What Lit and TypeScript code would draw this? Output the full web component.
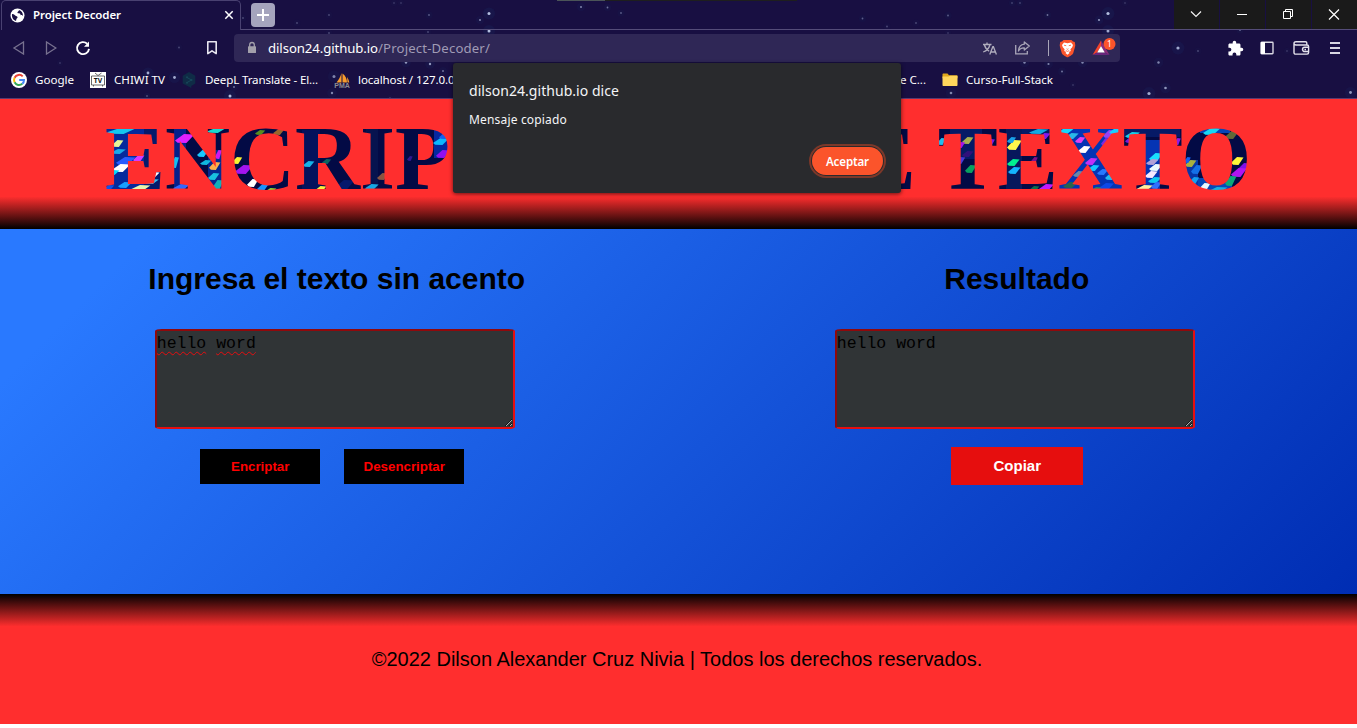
import { LitElement, html, svg, css } from "lit";
import { customElement } from "lit/decorators.js";

const UI = '"Noto Sans", "Open Sans", sans-serif';
const ARIAL = '"Liberation Sans", Arial, sans-serif';
const pen = document.createElement("canvas").getContext("2d")!;

/** Inline style that tracks a label so that it spans `width` pixels. */
function track(text: string, font: string, width: number) {
  pen.font = font;
  const gap = (width - pen.measureText(text).width) / text.length;
  return `letter-spacing:${gap.toFixed(3)}px`;
}

/** A single-line label with a fixed advance width. */
const label = (cls: string, text: string, font: string, width: number) =>
  html`<span class="label ${cls}" style="font:${font};${track(text, font, width)}">${text}</span>`;

// x, y, radius, opacity
const STARS: [number, number, number, number][] = [
  [489, 13.5, 1.5, 0.9], [480, 20, 1, 0.6], [489, 31, 1.5, 0.9], [581, 7, 1, 0.6], [607.5, 7.5, 0.9, 0.5],
  [621, 13, 0.9, 0.4], [329, 15, 0.9, 0.3], [297, 23, 0.9, 0.3], [394, 3, 0.8, 0.3], [401, 3, 0.8, 0.3],
  [429, 15, 0.9, 0.4], [428, 32, 0.9, 0.3], [329, 33, 0.9, 0.3], [406, 62.5, 1.2, 0.7], [430, 64, 1.2, 0.7],
  [443, 71, 1, 0.5], [334, 76.5, 1.5, 0.6], [332, 93, 1.2, 0.6], [390, 98, 0.8, 0.3], [174.5, 77.5, 1.4, 0.8],
  [148, 73, 1.4, 0.8], [230, 96, 1.5, 0.9], [234, 87, 1, 0.5], [147, 96, 0.8, 0.5], [60, 63, 0.8, 0.3],
  [179, 47.5, 0.9, 0.3], [243, 18, 0.9, 0.3], [862.5, 18.5, 0.9, 0.4], [887, 26.5, 0.9, 0.3], [916, 23, 0.9, 0.3],
  [948, 15.5, 0.9, 0.4], [1047.5, 15, 0.9, 0.5], [1012, 3, 0.8, 0.4], [1020, 3, 0.8, 0.4], [1108, 13.5, 1.6, 0.9],
  [1099, 20, 1.1, 0.7], [1108, 31, 1.5, 0.8], [1125, 3, 0.8, 0.3], [1178, 48, 1.6, 0.8], [1198, 51, 0.9, 0.3],
  [1158.5, 62.5, 1.2, 0.6], [1024.5, 62.5, 1.2, 0.6], [1048.5, 64, 1.1, 0.6], [1082.5, 62.5, 1.2, 0.6],
  [1062, 71.5, 1, 0.5], [1073, 85, 0.8, 0.3], [951, 93, 1.3, 0.6], [1149, 93.5, 1.6, 0.8], [1165.5, 88, 1.3, 0.7],
  [1350.5, 92.5, 1.4, 0.7], [1240, 30, 0.9, 0.5], [1287, 51, 0.8, 0.3], [948, 33, 0.8, 0.3],
];

const NAVY = "#030a45";
type Tile = [number, number, number, number, string];
// x, y, width, height, fill: soft washes under the lights
const BANDS: Tile[] = [
  [100, 125, 44, 70, "#062a9c"], [144, 125, 18, 70, "#051a6c"], [174, 125, 12, 70, "#04208c"], [208, 150, 14, 40, "#05298f"],
  [302, 130, 18, 60, "#04125c"], [366, 128, 12, 60, "#06134f"], [434, 128, 14, 30, "#0528a0"],
  [950, 125, 32, 34, "#061a66"], [1006, 125, 16, 66, "#07185c"], [1022, 125, 32, 10, "#061a66"],
  [1056, 125, 66, 70, "#0434b4"], [1122, 125, 58, 12, "#061a66"], [1144, 140, 16, 50, "#0434b4"],
  [1184, 160, 14, 30, "#0636a8"], [1198, 178, 34, 14, "#0648b8"], [1200, 125, 30, 8, "#0645b8"],
];
const LIGHTS: Tile[] = [
  [108, 129, 24, 4, "#14c8f0"], [113, 141, 9, 5, "#e2f59a"], [112, 150, 12, 3, "#19a8e8"], [134, 156, 9, 5, "#d838ff"],
  [117, 158, 16, 6, "#285cff"], [113, 165, 15, 6, "#ffffff"], [108, 171, 10, 3, "#00dcff"], [119, 183, 11, 4, "#18a0ff"],
  [132, 186, 16, 4, "#e8f5b0"], [147, 173, 11, 4, "#ffffff"], [145, 180, 12, 3, "#39c0f0"], [105, 186, 8, 3, "#1450e8"],
  [176, 135, 16, 7, "#e020ff"], [208, 129, 15, 3, "#19d8d0"], [198, 151, 9, 5, "#16c8ff"], [201, 161, 9, 3, "#10b8e0"],
  [210, 163, 9, 6, "#ffb04a"], [216, 151, 5, 7, "#d018f0"], [172, 158, 6, 9, "#14c0f4"], [174, 185, 14, 4, "#3068ff"],
  [209, 174, 9, 5, "#18c0e0"], [213, 181, 9, 9, "#12b0b8"], [256, 131, 8, 3, "#568c20"], [274, 130, 9, 4, "#98652c"],
  [233, 158, 8, 5, "#f8f432"], [236, 166, 15, 7, "#a414f0"], [248, 180, 9, 6, "#ffffff"], [258, 185, 9, 5, "#1494ff"],
  [266, 189, 9, 3, "#90d830"], [304, 162, 9, 4, "#14b4e8"], [323, 160, 7, 3, "#0a6460"], [316, 187, 9, 4, "#f8f040"],
  [336, 181, 16, 8, "#06186c"], [366, 185, 11, 4, "#14a8e4"], [378, 174, 9, 5, "#8a5440"], [434, 139, 13, 5, "#0cb8ff"],
  [440, 134, 8, 4, "#1460f0"], [437, 151, 11, 6, "#9010f0"], [408, 157, 4, 3, "#301890"],
  [938, 139, 7, 5, "#1cc0f0"], [963, 138, 9, 5, "#a8b04c"], [957, 143, 7, 4, "#a414e8"], [963, 152, 9, 4, "#30107c"],
  [956, 158, 8, 5, "#4a38d8"], [966, 166, 9, 6, "#08a060"], [988, 140, 6, 4, "#8018e0"], [1008, 141, 12, 8, "#fff84c"],
  [1008, 138, 7, 4, "#18a0e8"], [1008, 160, 10, 5, "#00f090"], [1009, 168, 10, 5, "#14b4ff"], [1030, 130, 16, 3, "#14a8e0"],
  [1040, 134, 9, 4, "#8018f0"], [1032, 158, 5, 4, "#80108c"], [1040, 185, 12, 5, "#c018ff"], [1030, 187, 8, 4, "#107048"],
  [1058, 129, 14, 4, "#14d8ff"], [1066, 134, 11, 4, "#28b8e8"], [1076, 138, 8, 4, "#e040f0"], [1079, 147, 10, 5, "#ffffff"],
  [1104, 131, 10, 6, "#9840f4"], [1110, 129, 11, 4, "#18d0ff"], [1102, 139, 7, 6, "#7c28e0"], [1086, 159, 10, 5, "#c030f8"],
  [1089, 166, 9, 4, "#14c8ff"], [1098, 170, 9, 4, "#2878ff"], [1106, 174, 9, 5, "#24b8f0"], [1074, 172, 9, 4, "#6888a8"],
  [1064, 183, 12, 4, "#28644c"], [1100, 184, 12, 5, "#0c48e8"], [1092, 188, 8, 3, "#208a60"], [1126, 133, 12, 4, "#14d0e8"],
  [1126, 138, 8, 4, "#7c18d8"], [1175, 139, 5, 5, "#9018e8"], [1150, 154, 11, 6, "#18e0ff"], [1147, 160, 10, 4, "#b0a0d8"],
  [1150, 165, 11, 5, "#e8f8ff"], [1146, 172, 10, 5, "#f8e8ff"], [1149, 178, 11, 4, "#10c8f0"], [1137, 186, 14, 4, "#fff0a0"],
  [1152, 183, 8, 5, "#3070ff"], [1204, 129, 14, 5, "#18d8f4"], [1226, 132, 11, 6, "#606838"], [1186, 161, 9, 5, "#a8b040"],
  [1192, 166, 9, 7, "#1470e8"], [1185, 158, 5, 4, "#1460f0"], [1232, 158, 10, 6, "#fff838"], [1240, 164, 8, 5, "#8010e8"],
  [1232, 169, 13, 7, "#b014f0"], [1226, 177, 9, 8, "#0ca878"], [1200, 184, 9, 6, "#e8f8ff"], [1209, 188, 16, 4, "#18b0e0"],
  [1190, 178, 8, 5, "#14a0f0"],
];
const wash = ([x, y, w, h, c]: Tile) => svg`<rect x=${x} y=${y} width=${w} height=${h} fill=${c} />`;
const tile = ([x, y, w, h, c]: Tile) =>
  svg`<path d="M${x - 1} ${y + h * 0.8} L${x + w * 0.5} ${y - 1} L${x + w * 1.15} ${y - 0.5} L${x + w * 0.65} ${y + h + 1} L${x + w * 0.1} ${y + h + 0.8}z" fill=${c} />`;

@customElement("browser-tabs")
class BrowserTabs extends LitElement {
  static styles = css`
    :host { display: flex; height: 30px; box-sizing: border-box; }
    .tab { display: flex; align-items: center; width: 240px; box-sizing: border-box; margin-left: 1px; padding: 0 6px 2px 8px; border: 1px solid #494171; border-bottom: 0; border-radius: 5px 5px 0 0; }
    .globe { margin: 1px 8px 0 0; }
    .close { margin-top: 1px; }
    .label { white-space: pre; color: #fff; flex: 1; }
    .rest { flex: 1; display: flex; align-items: stretch; border-bottom: 1px solid #544c79; }
    .plus { width: 24px; height: 24px; margin: 3px 0 0 10px; border-radius: 4px; background: #a5a4bd; }
    .space { flex: 1; display: flex; }
    .sliver { width: 240px; height: 1px; margin-left: 282px; background: linear-gradient(90deg, #4b5458 48px, #1e1e1e 48px); }
    .wins { display: flex; gap: 1px; }
    .win { width: 45px; height: 29px; background: #1a1a1a; }
  `;
  render() {
    return html`
      <div class="tab">
        <svg class="globe" width="15" height="15" viewBox="0 0 15 15"><circle cx="7.5" cy="7.5" r="7" fill="#fff" /><path d="M2 6.200 C3.200 5.600 4.300 6.600 5.200 7.400 C6.200 8.200 7.600 8 7.600 9.300 C7.600 10.300 6.500 10.400 6.300 11.400 L6 13 C4 12.500 2 10.500 1.900 7.500Z M6.700 2 L9 1.900 C9 3.300 7.900 3.400 7.500 4.200 C7.300 4.900 7.800 5.300 8.700 5.200 C10 5 10.500 6 10.600 7 C11 7.800 12.200 7.400 13 7.800 C13 5 11.300 2.600 8.900 2Z" fill="#180f42" /></svg>
        ${label("", "Project Decoder", `600 11.5px ${UI}`, 88)}
        <svg class="close" width="10" height="10" viewBox="0 0 10 10"><path d="M1.300 1.300 8.700 8.700M8.700 1.300 1.300 8.700" stroke="#fff" stroke-width="1.500" /></svg>
      </div>
      <div class="rest">
        <svg class="plus" viewBox="0 0 24 24"><path d="M12 6v12M6 12h12" stroke="#fff" stroke-width="2" /></svg>
        <div class="space"><div class="sliver"></div></div>
        <div class="wins">
          <svg class="win" viewBox="0 0 45 29"><path d="M17 11.500l5 5 5-5" fill="none" stroke="#f4f4f4" stroke-width="1.200" /></svg>
          <svg class="win" viewBox="0 0 45 29"><path d="M17 14.500h10" stroke="#fff" /></svg>
          <svg class="win" viewBox="0 0 45 29"><path d="M17.500 11.500h7v7h-7zM19.500 11.500v-2h7v7h-2" fill="none" stroke="#fff" /></svg>
          <svg class="win" viewBox="0 0 45 29"><path d="M17 9.500l10 10M27 9.500l-10 10" stroke="#fff" stroke-width="1.200" /></svg>
        </div>
      </div>`;
  }
}

@customElement("browser-toolbar")
class BrowserToolbar extends LitElement {
  static styles = css`
    :host { display: flex; align-items: center; height: 36px; color: #fff; }
    svg { display: block; flex: none; }
    .nav { display: flex; align-items: center; width: 234px; box-sizing: border-box; padding-left: 12px; }
    .fwd { margin-left: 17px; }
    .reload { margin-left: 18px; }
    .mark { margin-left: 114px; }
    .bar { display: flex; align-items: center; width: 886px; height: 28px; box-sizing: border-box; padding: 0 4px 0 13px; border-radius: 4px; background: #2f2756; }
    .label { white-space: pre; }
    .host { margin-left: 11px; }
    .path { color: #a09bb5; flex: 1; }
    .share { margin: 0 0 0 17px; }
    .rule { width: 1px; height: 16px; margin: 0 10px 0 17px; background: #a9a6b8; }
    .bat { margin-left: 15px; }
    .right { display: flex; align-items: center; padding-left: 107px; }
    .panel { margin-left: 16px; }
    .wallet { margin-left: 19px; }
    .menu { margin-left: 19px; }
  `;
  render() {
    return html`
      <div class="nav">
        <svg width="14" height="14" viewBox="0 0 14 14"><path d="M11.500 1v12L2 7z" fill="none" stroke="#77718f" stroke-width="1.300" /></svg>
        <svg class="fwd" width="14" height="14" viewBox="0 0 14 14"><path d="M3.500 1v12L12.900 7z" fill="none" stroke="#77718f" stroke-width="1.300" /></svg>
        <svg class="reload" width="16" height="16" viewBox="0 0 16 16"><path d="M12.200 3.800A6 6 0 1 0 14 8.800" fill="none" stroke="#fff" stroke-width="1.900" /><path d="M14 1.500V6.800h-5l2.200-2.200z" fill="#fff" /></svg>
        <svg class="mark" width="14" height="16" viewBox="0 0 14 16"><path d="M2.800 1.800h8.400v11.800L7 10.800l-4.200 2.800z" fill="none" stroke="#e8e6f0" stroke-width="1.600" stroke-linejoin="round" /></svg>
      </div>
      <div class="bar">
        <svg width="10" height="14" viewBox="0 0 10 14"><path d="M2.700 6V3.800a2.300 2.300 0 0 1 4.600 0V6" fill="none" stroke="#a3a0ab" stroke-width="1.300" /><rect x="1" y="5.200" width="8" height="6.800" rx="0.600" fill="#a3a0ab" /></svg>
        ${label("host", "dilson24.github.io", `13.2px ${UI}`, 110)}
        ${label("path", "/Project-Decoder/", `13.2px ${UI}`, 112)}
        <svg width="15" height="15" viewBox="0 0 15 15"><path d="M1 3.500h8.500M5 1.500v2M2.200 3.500c1 3.500 3 5.500 5 6.700M8 3.500c-1 4-3.500 6.500-6.800 7.500M7.800 13.500l3-7.800h.6l3 7.800M9 11h4.300" fill="none" stroke="#b0adbd" stroke-width="1.300" /></svg>
        <svg class="share" width="17" height="16" viewBox="0 0 17 16"><path d="M1.700 5v8.800h11.600V11" fill="none" stroke="#a9a6b8" stroke-width="1.300" /><path d="M10.300 2l5 4-5 4V7.800C7.800 7.700 5.700 8.600 4.500 11c.2-3.600 2.300-6.400 5.800-6.800z" fill="none" stroke="#a9a6b8" stroke-width="1.300" stroke-linejoin="round" /></svg>
        <div class="rule"></div>
        <svg width="17" height="19" viewBox="0 0 17 19"><path d="M4.500 1h8l1.500 1.600 1.800.4.500 3.200-.3 1.800-1.800 6.300c-.4 1.200-4.500 4-5.700 4S3.200 15.500 2.800 14.300L1 8 .7 6.200 1.200 3 3 2.600z" fill="#fb542b" /><path d="M5 3.600l3.500.6 3.500-.6 2 2.500-.8 2.200-1.800 2 .4 1.600-2 1 .7 1-2 1.800-2-1.800.7-1-2-1 .4-1.600-1.800-2L3 6.100z" fill="#fff" /><path d="M5 6.200l2.200.5M12 6.200l-2.200.5M7.600 9.800l.9.500.9-.500M6.800 11.600l1.700.8 1.700-.8" fill="none" stroke="#fb542b" stroke-width="0.800" /></svg>
        <svg class="bat" width="25" height="22" viewBox="0 0 25 22"><path d="M10 3.500L1.500 18l4.700-2.400L10 9z" fill="#f0432c" /><path d="M10 3.500L18.500 18l-4.700-2.400L10 9z" fill="#8a2c7a" /><path d="M1.500 18h17l-4.700-2.600H6.200z" fill="#67267c" /><path d="M10 9l-3.800 6.600h7.600z" fill="#fff" /><circle cx="18.500" cy="7" r="6" fill="#fb542b" /><text x="18.500" y="10" text-anchor="middle" font-size="8.500" font-family="Noto Sans, sans-serif" fill="#fff">1</text></svg>
      </div>
      <div class="right">
        <svg width="17" height="17" viewBox="0 0 24 24"><path d="M20.500 11H19V7c0-1.100-.9-2-2-2h-4V3.500a2.500 2.500 0 0 0-5 0V5H4c-1.100 0-2 .9-2 2v3.800h1.500a2.700 2.700 0 0 1 0 5.400H2V20c0 1.100.9 2 2 2h3.800v-1.500a2.700 2.700 0 0 1 5.400 0V22H17c1.100 0 2-.9 2-2v-4h1.500a2.500 2.500 0 0 0 0-5z" fill="#fff" /></svg>
        <svg class="panel" width="14" height="14" viewBox="0 0 14 14"><rect x="1" y="1.200" width="12" height="11.600" rx="0.700" fill="none" stroke="#d8d6e2" stroke-width="1.400" /><path d="M1 1h4v12H1z" fill="#fff" /></svg>
        <svg class="wallet" width="17" height="16" viewBox="0 0 17 16"><path d="M13.800 4.800V3c0-.8-.5-1.300-1.300-1.300H3C1.800 1.700 1 2.300 1 3.300S1.800 5 3 5h11c1 0 1.600.5 1.600 1.400v6.200c0 .9-.6 1.500-1.500 1.500H2.700C1.600 14.100 1 13.500 1 12.500v-9" fill="none" stroke="#e4e2ec" stroke-width="1.400" /><path d="M16 7.300h-4.300a2.100 2.100 0 0 0 0 4.300H16M11.500 9.500h1.500" fill="none" stroke="#e4e2ec" stroke-width="1.500" /></svg>
        <svg class="menu" width="12" height="14" viewBox="0 0 12 14"><path d="M1 2h10M1 7h10M1 12h10" stroke="#d8d6e2" stroke-width="1.900" /></svg>
      </div>`;
  }
}

@customElement("bookmark-bar")
class BookmarkBar extends LitElement {
  static styles = css`
    :host { display: flex; align-items: center; height: 33px; box-sizing: border-box; padding: 0 0 5px 11px; border-bottom: 1px solid #5b3a70; color: #fff; }
    svg { display: block; flex: none; margin-right: 8px; }
    .label { white-space: pre; }
    .item { display: flex; align-items: center; margin-right: 16px; }
    .deepl { margin-right: 16px; }
    .local { width: 566px; margin-right: 0; }
    .folder { margin-left: 16px; }
  `;
  render() {
    const f = `11.6px ${UI}`;
    return html`
      <div class="item">
        <svg width="16" height="16" viewBox="0 0 16 16"><circle cx="8" cy="8" r="8" fill="#fff" /><g fill="none" stroke-width="2"><path d="M11.700 4.400A5 5 0 0 0 3.600 5.700" stroke="#ea4335" /><path d="M3.600 5.700a5 5 0 0 0 0 4.600" stroke="#fbbc05" /><path d="M3.600 10.300a5 5 0 0 0 7.700 1.500" stroke="#34a853" /><path d="M11.300 11.800A5 5 0 0 0 13 8H8.200" stroke="#4285f4" /></g></svg>
        ${label("", "Google", f, 39)}
      </div>
      <div class="item">
        <svg width="16" height="16" viewBox="0 0 16 16"><path d="M0 0h16v16H0z" fill="#fff" /><path d="M5 1l3 2.500L11.500 1M1.500 4h13v9h-13zM3.500 13v1.500M12.500 13v1.500" fill="none" stroke="#444" stroke-width="0.800" /><text x="8" y="11" text-anchor="middle" font-size="6.800" font-weight="700" font-family="Noto Sans, sans-serif" fill="#111">TV</text></svg>
        ${label("", "CHIWI TV", f, 51)}
      </div>
      <div class="item deepl">
        <svg width="16" height="16" viewBox="0 0 16 16"><path d="M8 0l6.300 3.800v7.700L10.300 14v2L1.700 11.500V3.800z" fill="#0f2b46" /><path d="M6 5.500l4.500 2.500L6 10.500" fill="none" stroke="#17465a" /><circle cx="6" cy="5.300" r="1" fill="#17465a" /><circle cx="10.500" cy="8" r="1" fill="#17465a" /><circle cx="6" cy="10.700" r="1" fill="#17465a" /></svg>
        ${label("", "DeepL Translate - El...", f, 113)}
      </div>
      <div class="item local">
        <svg width="16" height="16" viewBox="0 0 16 16"><path d="M7.500 1v9.500H2.500C4.500 8 6.500 5 7.500 1zM8.500 1.500c3 2 4.500 5.500 4.500 9H8.500zM13 5c1 1.500 2 3.500 2.300 5.500H13.500z" fill="#f89c2c" /><text x="8" y="15.500" text-anchor="middle" font-size="7" font-weight="700" font-family="Liberation Sans, sans-serif" fill="#8d8b94">PMA</text></svg>
        ${label("", "localhost / 127.0.0.1", f, 106)}
      </div>
      ${label("", "e C...", f, 26)}
      <div class="item folder">
        <svg width="16" height="14" viewBox="0 0 16 14"><path d="M.5 1.500c0-.6.4-1 1-1h4l1.500 1.700H14.500c.6 0 1 .4 1 1v2H.5z" fill="#e0a81c" /><path d="M.5 3.600h6l1.200-.8h7.800v9.200c0 .6-.4 1-1 1h-13c-.6 0-1-.4-1-1z" fill="#ffd65c" /></svg>
        ${label("", "Curso-Full-Stack", f, 87)}
      </div>`;
  }
}

@customElement("alert-dialog")
class AlertDialog extends LitElement {
  static styles = css`
    :host { display: flex; flex-direction: column; width: 448px; height: 130px; box-sizing: border-box; padding: 18px 18px 0 16px; border-radius: 3px; background: #292a2d; box-shadow: 0 1px 4px rgba(0, 0, 0, 0.6); color: #f4f5f7; }
    .label { white-space: pre; }
    .message { margin-top: 10px; }
    .ok { align-self: flex-end; display: flex; align-items: center; justify-content: center; width: 71px; height: 28px; margin-top: 18px; border: 0; border-radius: 14px; background: #fb542b; color: #fff; box-shadow: 0 0 0 1px #292a2d, 0 0 0 3px #7d3829; padding: 0; }
  `;
  render() {
    return html`
      ${label("title", "dilson24.github.io dice", `14px/20px ${UI}`, 150)}
      ${label("message", "Mensaje copiado", `12px/18px ${UI}`, 98)}
      <button class="ok">${label("", "Aceptar", `600 11.6px ${UI}`, 43)}</button>`;
  }
}

@customElement("text-encryptor")
class TextEncryptor extends LitElement {
  static styles = css`
    :host { display: block; color: #000; font-family: "Liberation Sans", Arial, sans-serif; }
    .head { height: 130px; background: linear-gradient(#ff2e2e 75%, #000); }
    .title { display: block; }
    .title text { font: 700 90px "Liberation Serif", "Times New Roman", serif; fill: url(#lights); }
    .main { display: grid; grid-template-columns: 1fr 1fr; height: 365px; background: linear-gradient(135deg, #2979ff 9%, #002db3 100%); }
    .col { display: flex; flex-direction: column; align-items: center; padding: 32px 2px 0 0; }
    .left { padding-right: 5px; }
    h2 { margin: 0; font: 700 30px/36px "Liberation Sans", Arial, sans-serif; }
    .area { width: 360px; height: 100px; box-sizing: border-box; margin: 32px 4px 0 0; padding: 2px 0; resize: both; overflow: hidden; border: 2px solid; border-color: #8f090c #e60e10 #e60e10 #8f090c; border-radius: 7px / 2px; background: #303436; font: 16.5px/21px "Liberation Mono", monospace; }
    .typo { text-decoration: underline wavy #e60e10 1px; text-underline-offset: 3px; text-decoration-skip-ink: none; }
    .row { display: flex; gap: 24px; margin: 20px 9px 0 0; }
    button { border: 0; padding: 0; width: 120px; height: 35px; background: #000; color: #f00; font: 700 13.3px "Liberation Sans", Arial, sans-serif; }
    .copy { width: 132px; height: 38px; margin-top: 18px; padding: 0 0 2px 1px; background: #e60e0e; color: #fff; font-size: 15px; }
    .foot { height: 130px; box-sizing: border-box; padding: 53px 3px 0 0; text-align: center; background: linear-gradient(#000, #ff2e2e 25%); }
    .label { white-space: pre; }
  `;
  render() {
    return html`
      <header class="head">
        <svg class="title" width="1357" height="130" viewBox="0 99 1357 130">
          <defs><pattern id="lights" patternUnits="userSpaceOnUse" x="0" y="0" width="1357" height="240">
            <rect width="1357" height="240" fill=${NAVY} />${BANDS.map(wash)}${LIGHTS.map(tile)}
          </pattern></defs>
          <text x="105" y="189">ENCRIP<tspan dx="5">TADOR</tspan><tspan dx="-5"> DE</tspan><tspan dx="1"> TEXTO</tspan></text>
        </svg>
      </header>
      <main class="main">
        <section class="col left">
          <h2>Ingresa el texto sin acento</h2>
          <div class="area"><span class="typo">hello</span> <span class="typo">word</span></div>
          <div class="row"><button>Encriptar</button><button>Desencriptar</button></div>
        </section>
        <section class="col">
          <h2>Resultado</h2>
          <div class="area">hello word</div>
          <button class="copy">Copiar</button>
        </section>
      </main>
      <footer class="foot">${label("", "©2022 Dilson Alexander Cruz Nivia | Todos los derechos reservados.", `20px/24px ${ARIAL}`, 612)}</footer>`;
  }
}

@customElement("app-root")
class AppRoot extends LitElement {
  static styles = css`
    :host { display: block; position: relative; width: 1357px; height: 728px; overflow: hidden; background: #fff; }
    .chrome { position: relative; height: 99px; background: #180f42; }
    .sky { position: absolute; inset: 0; }
    .bars { position: relative; }
    .dialog { position: absolute; left: 453px; top: 63px; }
  `;
  render() {
    return html`
      <div class="chrome">
        <svg class="sky" width="1357" height="99">
          ${STARS.map(([x, y, r, o]) => svg`<circle cx=${x} cy=${y} r=${r * 4} fill="#1d4a8c" opacity=${o * 0.13} /><circle cx=${x} cy=${y} r=${r} fill="#c4d0f0" opacity=${o} />`)}
        </svg>
        <div class="bars">
          <browser-tabs></browser-tabs>
          <browser-toolbar></browser-toolbar>
          <bookmark-bar></bookmark-bar>
        </div>
      </div>
      <text-encryptor></text-encryptor>
      <alert-dialog class="dialog"></alert-dialog>`;
  }
}
